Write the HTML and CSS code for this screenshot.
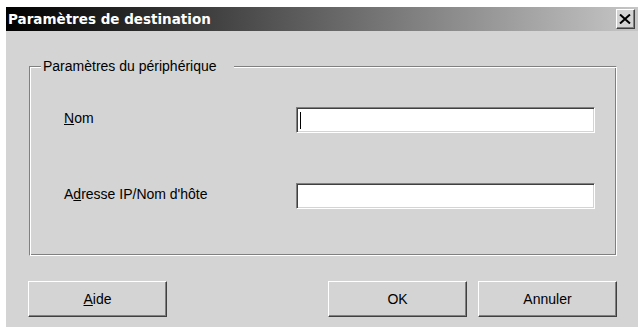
FILE: index.html
```html
<!DOCTYPE html>
<html lang="fr">
<head>
<meta charset="utf-8">
<title>Paramètres de destination</title>
<link rel="stylesheet" href="styles.css">
</head>
<body>
<div class="dialog">
  <div class="titlebar">
    <span class="title">Paramètres de destination</span>
    <div class="close">
      <svg width="12" height="10" viewBox="0 0 12 10"><path d="M1 0.5 L11 9.5 M11 0.5 L1 9.5" stroke="#000" stroke-width="2" fill="none"/></svg>
    </div>
  </div>
  <div class="content">
    <fieldset class="group">
      <legend class="legend">Paramètres du périphérique</legend>
      <div class="row row-first">
        <label class="label"><u>N</u>om</label>
        <div class="field"><span class="caret"></span></div>
      </div>
      <div class="row row-second">
        <label class="label">A<u>d</u>resse IP/Nom d'hôte</label>
        <div class="field"></div>
      </div>
    </fieldset>
    <div class="buttons">
      <button class="btn"><u>A</u>ide</button>
      <div class="spacer"></div>
      <button class="btn">OK</button>
      <button class="btn btn-cancel">Annuler</button>
    </div>
  </div>
</div>
</body>
</html>
```
FILE: styles.css
```css
html, body {
  margin: 0;
  padding: 0;
  background: #ffffff;
}
body {
  font-family: "Liberation Sans", Arial, sans-serif;
  font-size: 14px;
  color: #000;
}
.dialog {
  margin: 7px 0 0 6px;
  width: 632px;
  height: 320px;
  background: #d4d4d4;
  display: flex;
  flex-direction: column;
}
.titlebar {
  height: 24px;
  flex: none;
  display: flex;
  align-items: center;
  justify-content: space-between;
  padding: 0 3px 0 2px;
  background: linear-gradient(to right, #000000 0%, #c6c6c6 100%);
}
.title {
  font-family: "DejaVu Sans", Verdana, sans-serif;
  font-weight: bold;
  font-size: 13.5px;
  color: #ffffff;
  white-space: nowrap;
}
.close {
  width: 19px;
  height: 20px;
  box-sizing: border-box;
  background: #d4d4d4;
  border: 1px solid;
  border-color: #ffffff #404040 #404040 #ffffff;
  box-shadow: inset -1px -1px #808080;
  display: flex;
  align-items: center;
  justify-content: center;
  padding: 0 1px 1px 0;
}
.close svg { display: block; }
.content {
  padding: 0 21px 0 22px;
  display: flex;
  flex-direction: column;
}
.group {
  margin: 27px 0 0 1px;
  width: 588px;
  height: 198px;
  box-sizing: border-box;
  padding: 0 0 0 11px;
  border: 1px solid;
  border-color: #808080 #ffffff #ffffff #808080;
  box-shadow: inset 1px 1px #ffffff, inset -1px -1px #808080;
  min-width: 0;
}
.legend {
  padding: 0 17px 0 2px;
  line-height: 16px;
  background: #d4d4d4;
  white-space: nowrap;
}
.row {
  display: flex;
  align-items: center;
  height: 26px;
}
.row-first { margin-top: 33px; }
.row-second { margin-top: 50px; }
.label {
  width: 232px;
  margin-left: 23px;
  padding-bottom: 4px;
  line-height: 16px;
  white-space: nowrap;
}
.field {
  flex: none;
  width: 299px;
  height: 26px;
  box-sizing: border-box;
  background: #ffffff;
  border: 1px solid;
  border-color: #808080 #ffffff #ffffff #808080;
  box-shadow: inset 1px 1px #404040, inset -1px -1px #d4d4d4;
  padding-left: 3px;
  display: flex;
  align-items: center;
}
.caret {
  width: 1px;
  height: 17px;
  background: #000;
}
.buttons {
  margin-top: 25px;
  display: flex;
  align-items: center;
}
.spacer { flex: 1; }
.btn {
  width: 139px;
  height: 36px;
  box-sizing: border-box;
  background: #d4d4d4;
  border: 1px solid;
  border-color: #ffffff #404040 #404040 #ffffff;
  box-shadow: inset -1px -1px #808080;
  font-family: "Liberation Sans", Arial, sans-serif;
  font-size: 14px;
  color: #000;
  padding: 0;
  margin: 0;
}
.btn-cancel { margin-left: 11px; }
```
